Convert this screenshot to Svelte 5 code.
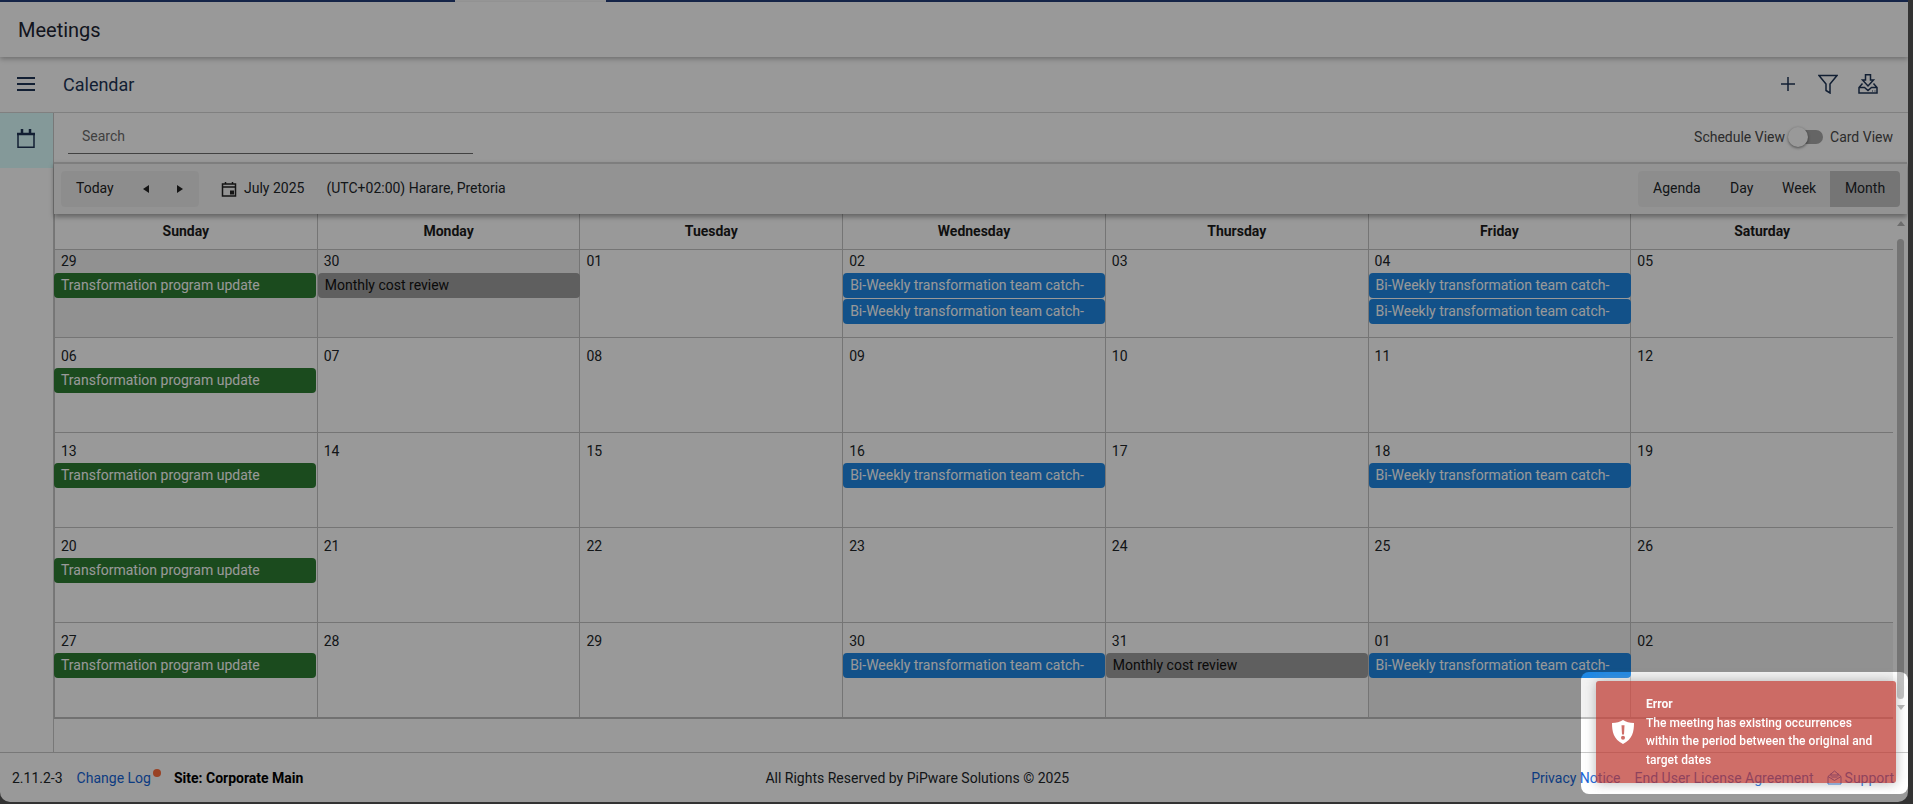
<script>
  const days = ['Sunday','Monday','Tuesday','Wednesday','Thursday','Friday','Saturday'];
  const T = { t: 'Transformation program update', c: 'green' };
  const M = { t: 'Monthly cost review', c: 'grey' };
  const B = { t: 'Bi-Weekly transformation team catch-', c: 'blue' };
  const cells = [
    { d: '29', off: true, ev: [T] }, { d: '30', off: true, ev: [M] }, { d: '01' }, { d: '02', ev: [B, B] }, { d: '03' }, { d: '04', ev: [B, B] }, { d: '05' },
    { d: '06', ev: [T] }, { d: '07' }, { d: '08' }, { d: '09' }, { d: '10' }, { d: '11' }, { d: '12' },
    { d: '13', ev: [T] }, { d: '14' }, { d: '15' }, { d: '16', ev: [B] }, { d: '17' }, { d: '18', ev: [B] }, { d: '19' },
    { d: '20', ev: [T] }, { d: '21' }, { d: '22' }, { d: '23' }, { d: '24' }, { d: '25' }, { d: '26' },
    { d: '27', ev: [T] }, { d: '28' }, { d: '29' }, { d: '30', ev: [B] }, { d: '31', ev: [M] }, { d: '01', off: true, ev: [B] }, { d: '02', off: true }
  ];
</script>

<div class="page">
  <div class="topbar"><span class="seg s1"></span><span class="seg s2"></span><span class="seg s3"></span></div>
  <header class="app-head">Meetings</header>
  <div class="sub-head">
    <svg class="burger" width="18" height="14" viewBox="0 0 18 14"><path d="M0 1h18M0 7h18M0 13h18" /></svg>
    <span class="sub-title">Calendar</span>
    <div class="actions">
      <svg class="plus" width="16" height="16" viewBox="0 0 16 16"><path d="M8 1v14M1 8h14" /></svg>
      <svg width="20" height="20" viewBox="0 0 20 20"><path d="M1 1.500h18l-7 8.500v9l-4-2.500V10z" /></svg>
      <svg width="20" height="20" viewBox="0 0 20 20"><path d="M7.500.7h5v5.300h3L10 12 4.500 6h3zM4.500 9.500 1 13.500V19h18v-5.500l-3.500-4M1 13.500h5.500L10 16.500l3.500-3h5.500" /><path class="dots" d="M14 17h1M16.500 17h1" /></svg>
    </div>
  </div>

  <div class="main">
    <aside class="side">
      <div class="side-item">
        <svg width="18" height="19" viewBox="0 0 18 19"><path d="M1 5h16v13.200H1z" /><path class="heavy" d="M0 5h18M5 0v4M13 0v4" /></svg>
      </div>
    </aside>
    <div class="content">
      <div class="search-row">
        <div class="search">Search</div>
        <div class="toggle-wrap">
          <span>Schedule View</span>
          <span class="toggle"><span class="knob"></span></span>
          <span>Card View</span>
        </div>
      </div>

      <div class="toolbar">
        <div class="group nav">
          <span class="today">Today</span>
          <svg width="6" height="8" viewBox="0 0 6 8"><path class="fill" d="M6 0v8L0 4z" /></svg>
          <svg width="6" height="8" viewBox="0 0 6 8"><path class="fill" d="M0 0v8l6-4z" /></svg>
        </div>
        <svg class="cal-mini" width="16" height="16" viewBox="0 0 16 16"><path d="M1.500 3h13v12h-13zM1.500 6h13M4.500 1v2M11.500 1v2" /><path class="fill" d="M9 9.500h4v4H9z" /></svg>
        <span class="month">July 2025</span>
        <span class="tz">(UTC+02:00) Harare, Pretoria</span>
        <div class="group views">
          <span class="view agenda">Agenda</span>
          <span class="view day">Day</span>
          <span class="view week">Week</span>
          <span class="view active">Month</span>
        </div>
      </div>

      <div class="cal-wrap">
        <div class="cal">
          <div class="dow">
            {#each days as d}<div class="dow-cell">{d}</div>{/each}
          </div>
          <div class="grid">
            {#each cells as c}
              <div class="cell" class:off={c.off}>
                <div class="num">{c.d}</div>
                {#each c.ev ?? [] as e}
                  <div class="ev {e.c}">{e.t}</div>
                {/each}
              </div>
            {/each}
          </div>
        </div>
        <div class="scroll">
          <span class="arr up"></span>
          <span class="thumb"></span>
          <span class="arr down"></span>
        </div>
      </div>
    </div>
  </div>

  <footer class="foot">
    <div class="foot-l">
      <span>2.11.2-3</span>
      <span class="clog"><a href="#log">Change Log</a><i class="dot"></i></span>
      <b>Site: Corporate Main</b>
    </div>
    <div class="foot-c">All Rights Reserved by PiPware Solutions © 2025</div>
    <div class="foot-r">
      <a href="#p">Privacy Notice</a>
      <a href="#e">End User License Agreement</a>
      <a href="#s" class="sup">
        <svg width="15" height="15" viewBox="0 0 15 15"><path d="M1 6.500 7.500 1 14 6.500V14H1zM1 6.500l6.500 4 6.500-4M4 6.500V3.500M11 6.500V3.500M4.500 5h6M4.500 7h6" /></svg>
        Support
      </a>
    </div>
  </footer>
</div>

<div class="spot"></div>
<div class="toast">
  <svg class="shield" width="22" height="24" viewBox="0 0 22 25" preserveAspectRatio="none"><path fill-rule="evenodd" d="M11 0c3 2 6.500 3 11 3.200 0 9-1.500 17-11 21.800C1.500 20.200 0 12.200 0 3.200 4.500 3 8 2 11 0zM9.500 5.500l.5 9.500h2l.5-9.500zM11 16.500a2 2 0 1 0 0 4 2 2 0 0 0 0-4z" /></svg>
  <div class="toast-title">Error</div>
  <div class="toast-msg">The meeting has existing occurrences within the period between the original and target dates</div>
</div>

<style>
  :global(html), :global(body) { margin: 0; height: 100%; overflow: hidden; background: #555; }
  .page {
    width: 1908px; height: 802px; background: #fff; display: flex; flex-direction: column;
    font: 14px Roboto, sans-serif; color: #212529; border-radius: 0 0 10px 10px; overflow: hidden;
  }
  .topbar { display: flex; height: 2px; flex: none; }
  .seg { display: block; background: #25417d; }
  .s1 { width: 455px; }
  .s2 { width: 151px; background: #fff; }
  .s3 { flex: 1; }
  .app-head {
    height: 55px; flex: none; display: flex; align-items: center; padding-left: 18px; font-size: 20px;
    color: #1d2433; box-shadow: 0 2px 5px rgba(0,0,0,.28); position: relative;
  }
  .sub-head {
    height: 56px; flex: none; box-sizing: border-box; border-bottom: 1px solid #d6d6d6; display: flex; align-items: center;
    padding: 0 0 1px 17px; color: #1f3556;
  }
  .sub-title { margin-left: 28px; font-size: 18px; }
  svg { display: block; flex: none; }
  svg path { fill: none; stroke: currentColor; stroke-width: 1.500; }
  svg path.fill { fill: currentColor; stroke: none; }
  .burger path { stroke-width: 2; }
  .actions { margin-left: auto; margin-right: 30px; display: flex; align-items: center; gap: 20px; }
  .plus { margin-right: 2px; }
  .dots { stroke-width: 1; }
  .main { flex: 1; min-height: 0; display: flex; }
  .side { width: 54px; flex: none; box-sizing: border-box; border-right: 1px solid #c8c8c8; }
  .side-item {
    height: 55px; box-sizing: border-box; background: #dcffff; display: flex; align-items: center; justify-content: center; color: #1f3556;
    padding: 0 1px 4px 0;
  }
  .side-item .heavy { stroke-width: 2.500; }
  .content { flex: 1; min-width: 0; display: flex; flex-direction: column; }
  .search-row { height: 49px; flex: none; display: flex; align-items: flex-start; padding: 0 15px 0 14px; }
  .search {
    width: 405px; height: 41px; box-sizing: border-box; border-bottom: 1px solid #6f6f6f; color: #6c6c6c; padding: 15px 0 0 14px;
  }
  .toggle-wrap { margin-left: auto; height: 47px; display: flex; align-items: center; color: #4a4a4a; }
  .toggle { width: 33px; height: 14px; margin: 0 7px 0 5px; border-radius: 7px; background: #a8a8a8; position: relative; display: block; }
  .knob {
    position: absolute; left: -2px; top: -3px; width: 20px; height: 20px; border-radius: 50%; background: #fff;
    box-shadow: 0 1px 3px rgba(0,0,0,.5);
  }
  .toolbar {
    height: 52px; flex: none; box-sizing: border-box; border-top: 2px solid #d2d2d2; background: #f6f6f6; display: flex; align-items: center;
    padding: 0 7px; box-shadow: 0 3px 5px rgba(0,0,0,.35); position: relative; margin-right: 1px;
  }
  .group { height: 36px; background: #ececec; border-radius: 4px; display: flex; align-items: center; }
  .nav { width: 138px; box-sizing: border-box; padding-left: 15px; color: #222; }
  .today { width: 67px; padding-bottom: 2px; }
  .nav svg + svg { margin-left: 28px; }
  .cal-mini { margin-left: 22px; color: #222; }
  .month { margin-left: 7px; padding-bottom: 2px; }
  .tz { margin-left: 22px; padding-bottom: 2px; }
  .views { margin-left: auto; width: 262px; overflow: hidden; }
  .view { display: flex; align-items: center; height: 100%; box-sizing: border-box; padding-bottom: 2px; }
  .agenda { padding-left: 15px; width: 92px; }
  .day { width: 52px; }
  .week { width: 48px; }
  .active { width: 70px; justify-content: center; background: #c4c4c4; }
  .cal-wrap { display: flex; height: 538px; flex: none; }
  .cal { width: 1839px; flex: none; }
  .dow { display: grid; grid-template-columns: repeat(7, 1fr); height: 36px; box-sizing: border-box; border-bottom: 1px solid #c4c4c4; }
  .dow-cell {
    display: flex; align-items: center; justify-content: center; font-weight: 700; border-left: 1px solid #c4c4c4; color: #1c1c1c;
    padding-bottom: 2px;
  }
  .grid {
    display: grid; grid-template-columns: repeat(7, 1fr); grid-template-rows: 88px 95px 95px 95px 94px;
    border-bottom: 2px solid #bdbdbd; box-sizing: border-box; height: 469px;
  }
  .cell { border-left: 1px solid #c4c4c4; border-bottom: 1px solid #c4c4c4; min-width: 0; padding-top: 7px; box-sizing: border-box; }
  .cell:nth-child(-n+7) { padding-top: 0; }
  .cell:nth-last-child(-n+7) { border-bottom: none; }
  .cell.off { background: #f2f2f2; }
  .num { height: 23px; padding: 2px 0 0 6px; box-sizing: border-box; line-height: 18px; }
  .ev {
    height: 25px; line-height: 25px; margin: 0 0 1px 0; padding-left: 7px; border-radius: 4px; white-space: nowrap; overflow: hidden;
    width: 262px; box-sizing: border-box; color: #fff; position: relative;
  }
  .cell:nth-child(7n+1) .ev { margin-left: -1px; }
  .green { background: #2e7d32; }
  .blue { background: #1e88e5; }
  .grey { background: #9e9e9e; color: #111; }
  .scroll { flex: 1; position: relative; display: flex; flex-direction: column; align-items: center; padding-top: 7px; }
  .arr { width: 0; height: 0; border-left: 4px solid transparent; border-right: 4px solid transparent; flex: none; }
  .up { border-bottom: 5px solid #b5b5b5; }
  .down { border-top: 5px solid #b5b5b5; margin-top: 6px; }
  .thumb { width: 7px; height: 460px; margin-top: 13px; background: #c1c1c1; border-radius: 4px; flex: none; }
  .foot {
    height: 50px; flex: none; margin-top: auto; box-sizing: border-box; border-top: 1px solid #c8c8c8; display: flex;
    justify-content: space-between; align-items: center; padding: 0 14px 0 12px;
  }
  a { color: #1565d8; text-decoration: none; }
  .foot-l { display: flex; align-items: center; }
  .clog { margin-left: 14px; position: relative; }
  .dot { position: absolute; right: -10px; top: -1px; width: 8px; height: 8px; border-radius: 50%; background: #ff6e3c; }
  .foot-l b { margin-left: 23px; color: #000; }
  .foot-r { display: flex; align-items: center; gap: 14px; }
  .sup { display: flex; align-items: center; gap: 3px; margin-left: -1px; }
  .sup path { stroke-width: 1; }
  .spot {
    position: fixed; left: 1581px; top: 672px; width: 327px; height: 122px; border-radius: 8px;
    box-shadow: 0 0 0 3000px rgba(0,0,0,.4);
  }
  .toast {
    position: fixed; left: 1596px; top: 681px; width: 300px; height: 102px; box-sizing: border-box; padding: 14px 15px 0 50px;
    background: #bd362f; opacity: .72; border-radius: 3px; box-shadow: 0 0 12px #999; color: #fff;
    font: 500 12px/18.500px Roboto, sans-serif; letter-spacing: .05px;
  }
  .toast-title { font-weight: 700; }
  .shield { position: absolute; left: 16px; top: 39px; }
  .shield path { fill: #fff; stroke: none; }
</style>
